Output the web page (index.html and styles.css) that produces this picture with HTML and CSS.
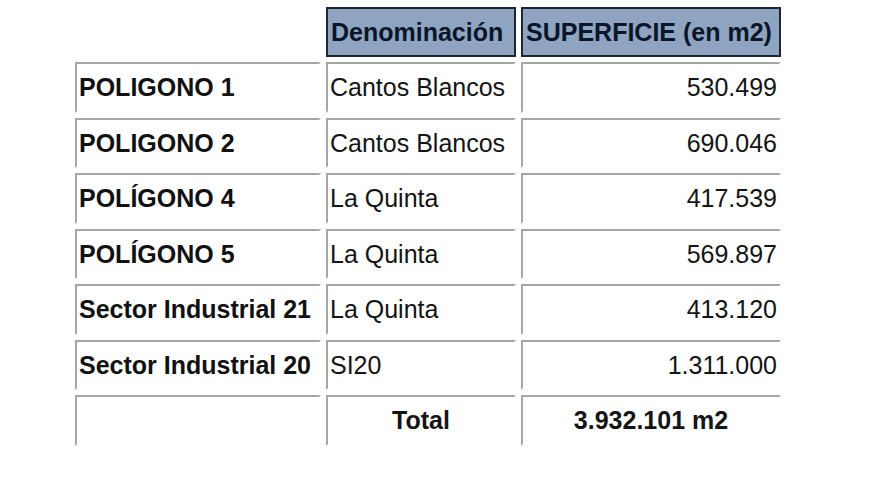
FILE: index.html
```html
<!DOCTYPE html>
<html lang="es">
<head>
<meta charset="utf-8">
<title>Superficie de polígonos</title>
<link rel="stylesheet" href="styles.css">
</head>
<body>
<table class="sup">
  <colgroup>
    <col class="c1">
    <col class="c2">
    <col class="c3">
  </colgroup>
  <tr class="head">
    <td class="blank"></td>
    <th>Denominación</th>
    <th>SUPERFICIE (en m2)</th>
  </tr>
  <tr class="row">
    <td class="name">POLIGONO 1</td>
    <td>Cantos Blancos</td>
    <td class="num">530.499</td>
  </tr>
  <tr class="row">
    <td class="name">POLIGONO 2</td>
    <td>Cantos Blancos</td>
    <td class="num">690.046</td>
  </tr>
  <tr class="row">
    <td class="name">POLÍGONO 4</td>
    <td>La Quinta</td>
    <td class="num">417.539</td>
  </tr>
  <tr class="row">
    <td class="name">POLÍGONO 5</td>
    <td>La Quinta</td>
    <td class="num">569.897</td>
  </tr>
  <tr class="row">
    <td class="name">Sector Industrial 21</td>
    <td>La Quinta</td>
    <td class="num">413.120</td>
  </tr>
  <tr class="row">
    <td class="name">Sector Industrial 20</td>
    <td>SI20</td>
    <td class="num">1.311.000</td>
  </tr>
  <tr class="row">
    <td></td>
    <td class="tot">Total</td>
    <td class="tot">3.932.101 m2</td>
  </tr>
</table>
</body>
</html>
```

FILE: styles.css
```css
html, body {
  margin: 0;
  padding: 0;
  background: #ffffff;
}

body {
  font-family: "Liberation Sans", Arial, sans-serif;
  font-size: 25px;
  color: #141414;
  overflow: hidden;
}

.sup {
  margin: 2px 0 0 70px;
  border-collapse: separate;
  border-spacing: 5px 5.5px;
  table-layout: fixed;
  width: 716px;
}

.c1 { width: 246px; }
.c2 { width: 190px; }
.c3 { width: 260px; }

.sup td,
.sup th {
  box-sizing: border-box;
  padding: 0 2px 0 2px;
  vertical-align: middle;
  white-space: nowrap;
  line-height: 28px;
}

.head th {
  height: 50px;
  background: #8ea4c0;
  border: 2px solid #1c2635;
  color: #0a1529;
  font-weight: bold;
  text-align: left;
  padding-left: 3px;
}

.head .blank {
  border: none;
}

.row td {
  height: 50.5px;
  border-style: solid;
  border-width: 2px;
  border-color: #a6a6a6 #ffffff #ffffff #a6a6a6;
}

.name {
  font-weight: bold;
  color: #111111;
}

.num {
  text-align: right;
}

.tot {
  font-weight: bold;
  text-align: center;
}
```
